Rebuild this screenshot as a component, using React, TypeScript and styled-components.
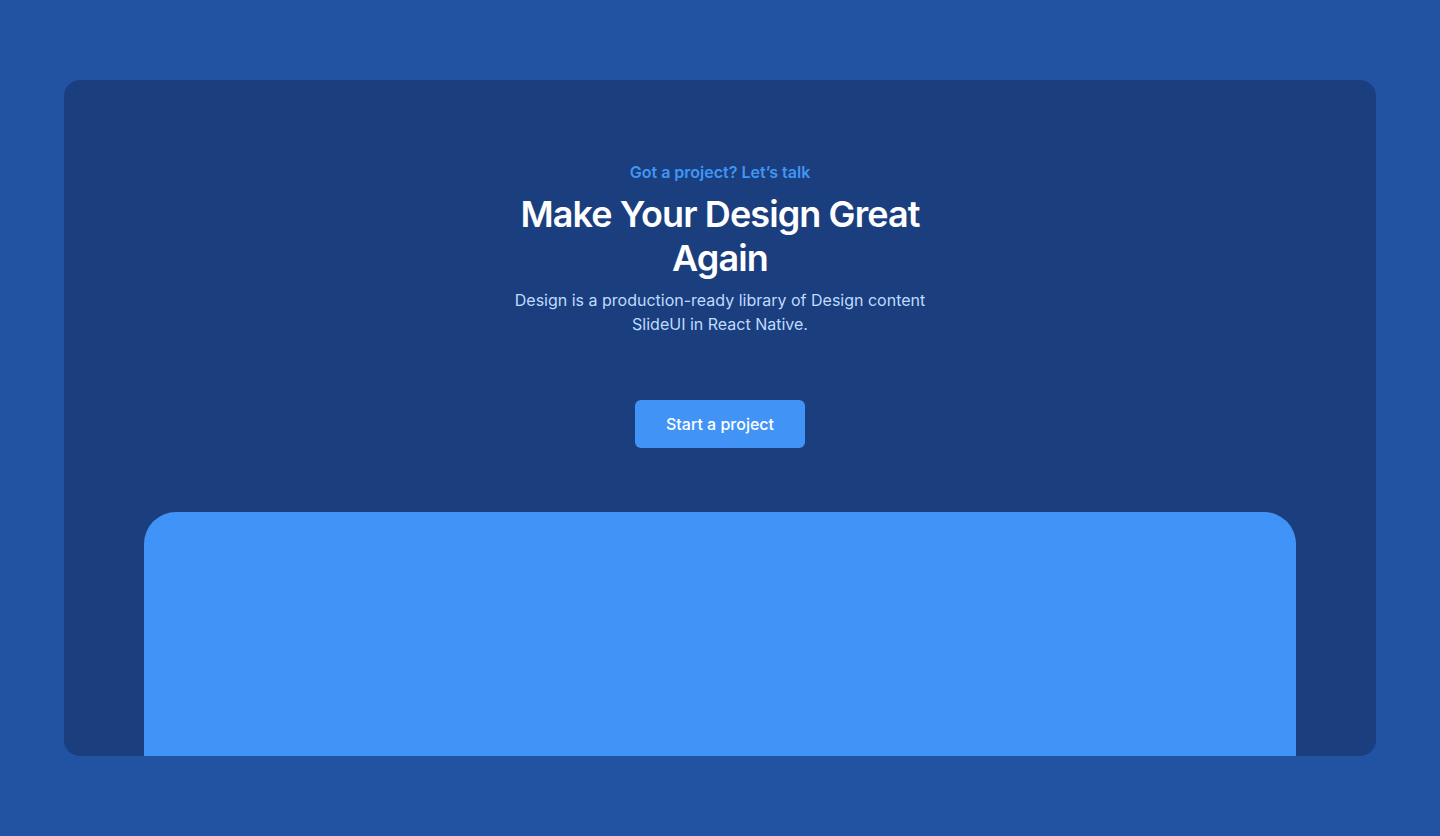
import React from "react";
import styled, { createGlobalStyle } from "styled-components";

const Global = createGlobalStyle`
  html, body { margin: 0; padding: 0; }
  body { background: #2253a3; font-family: Inter, "Noto Sans", sans-serif; -webkit-font-smoothing: antialiased; }
  * { box-sizing: border-box; }
`;

const Page = styled.div`
  width: 1440px;
  height: 836px;
  padding: 80px 64px;
  background: #2253a3;
`;

const Card = styled.section`
  height: 676px;
  background: #1b3e7e;
  border-radius: 16px;
  overflow: hidden;
  display: flex;
  flex-direction: column;
  align-items: center;
  padding-top: 80px;
`;

const Eyebrow = styled.p`
  flex-shrink: 0;
  margin: 0;
  font-size: 16px;
  line-height: 24px;
  font-weight: 600;
  color: #4096f5;
`;

const Title = styled.h1`
  flex-shrink: 0;
  margin: 8px 0 0;
  width: 420px;
  text-align: center;
  font-size: 36px;
  line-height: 44px;
  font-weight: 600;
  letter-spacing: -0.9px;
  color: #ffffff;
`;

const Lead = styled.p`
  flex-shrink: 0;
  margin: 8px 0 0;
  width: 440px;
  text-align: center;
  font-size: 16px;
  line-height: 24px;
  font-weight: 400;
  color: #bfdbfe;
`;

const Button = styled.button`
  flex-shrink: 0;
  margin-top: 64px;
  width: 170px;
  height: 48px;
  border: none;
  border-radius: 6px;
  background: #4194f6;
  color: #ffffff;
  font-family: inherit;
  font-size: 16px;
  font-weight: 500;
  cursor: pointer;
`;

const Showcase = styled.div`
  flex: 0 0 300px;
  margin-top: 64px;
  width: 1152px;
  background: #4194f7;
  border-radius: 32px 32px 0 0;
`;

export default function App() {
  return (
    <>
      <Global />
      <Page>
        <Card>
          <Eyebrow>Got a project? Let’s talk</Eyebrow>
          <Title>Make Your Design Great Again</Title>
          <Lead>Design is a production-ready library of Design content SlideUI in React Native.</Lead>
          <Button>Start a project</Button>
          <Showcase />
        </Card>
      </Page>
    </>
  );
}
